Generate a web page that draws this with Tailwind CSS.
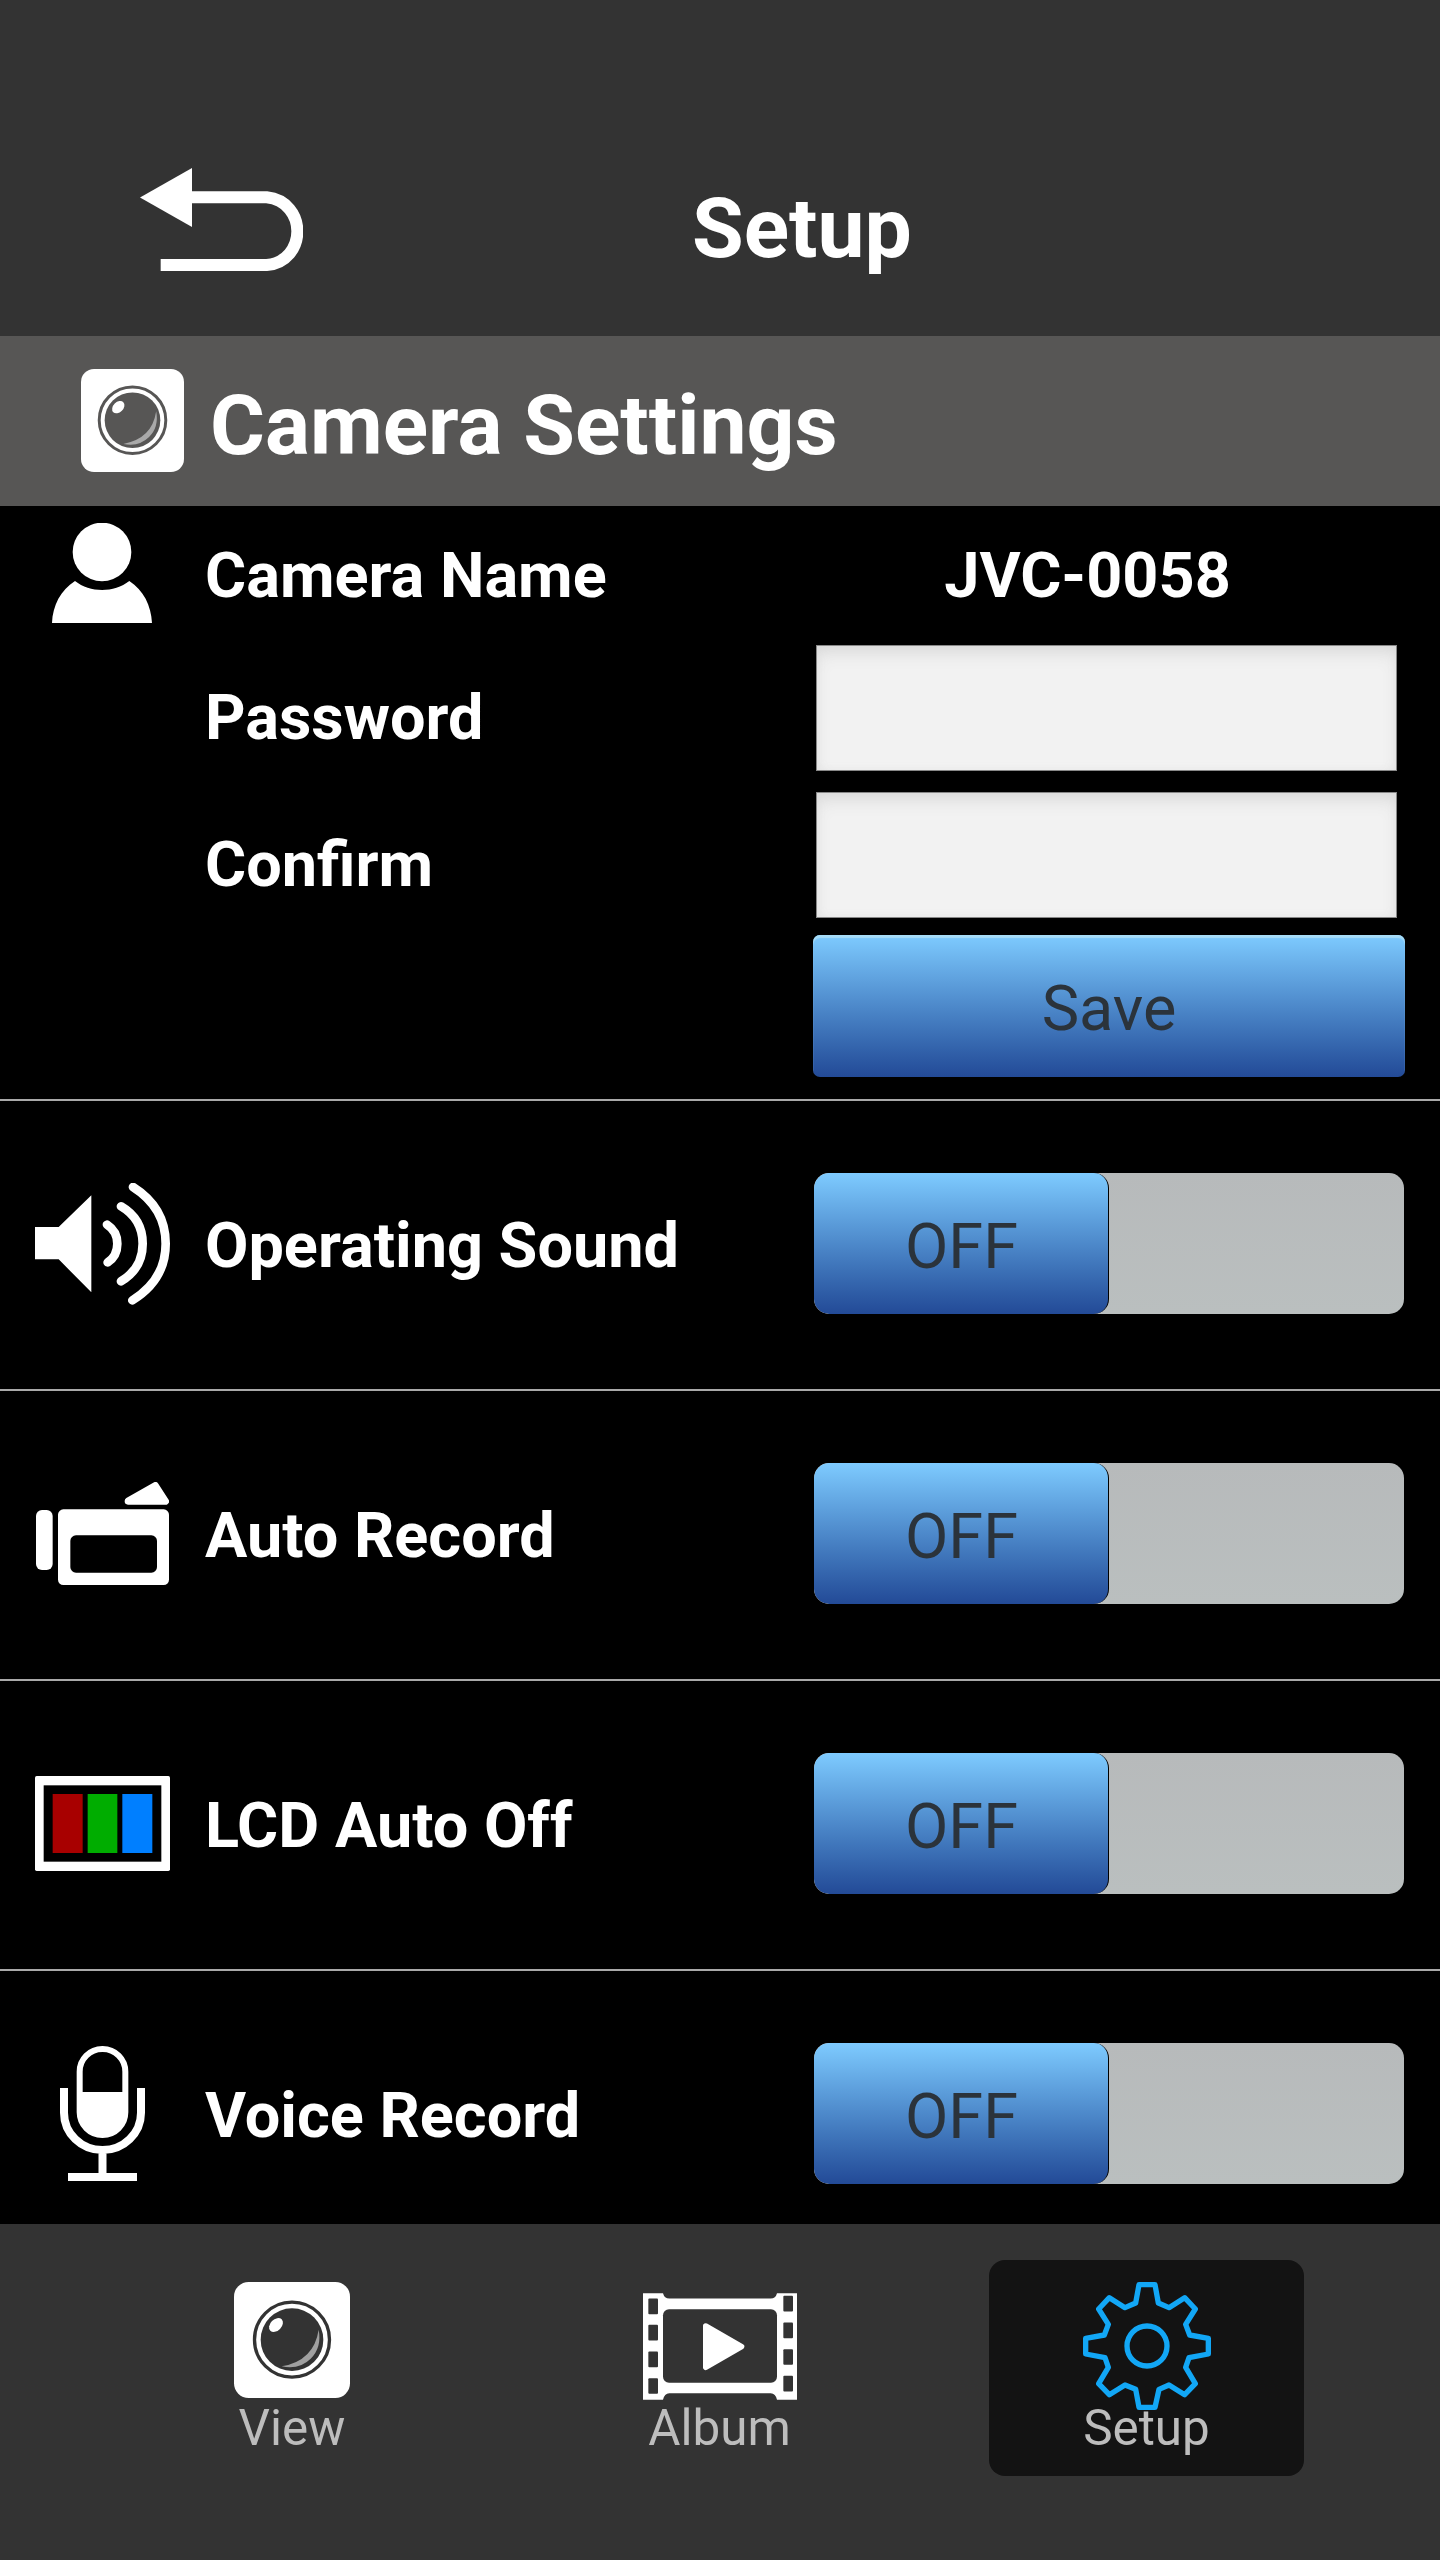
<!DOCTYPE html>
<html lang="en">
<head>
    <meta charset="UTF-8">
    <title>Setup</title>
    <script src="https://cdn.jsdelivr.net/npm/@tailwindcss/browser@4"></script>
</head>
<body class="bg-black font-['Roboto',sans-serif] text-white">
<div class="w-[1440px] h-[2560px] flex flex-col overflow-hidden">

    <!-- Header -->
    <header class="h-[336px] shrink-0 bg-[#333333] flex items-start pl-[140px] pt-[168px]">
        <button class="block" aria-label="Back">
            <svg class="block w-[163px] h-[103px]" viewBox="120 84 489 309">
                <path d="M120 172.500L276 84V261Z" fill="#fff"/>
                <path d="M270 172H500C560 178 592 226 592 274S560 370 500 375H182" fill="none" stroke="#fff" stroke-width="36"/>
            </svg>
        </button>
        <h1 class="ml-[389px] mt-[11px] text-[84px] leading-[100px] font-bold">Setup</h1>
    </header>

    <!-- Section title -->
    <div class="h-[170px] shrink-0 bg-[#575655] flex items-center pl-[81px]">
        <svg class="block w-[103px] h-[103px] -mt-[1px]" viewBox="0 0 348 348">
            <rect width="348" height="348" rx="44" fill="#fff"/>
            <circle cx="174" cy="173" r="112.500" fill="none" stroke="#575655" stroke-width="10"/>
            <circle cx="174" cy="173" r="94" fill="#575655"/>
            <ellipse cx="126" cy="129" rx="24" ry="17" transform="rotate(-45 126 129)" fill="#fff"/>
            <path d="M254 143Q264 196 230 230T143 253Q240 236 254 143Z" fill="#a9a9a9"/>
        </svg>
        <h2 class="ml-[26px] mt-[9px] text-[84px] leading-[100px] font-bold">Camera Settings</h2>
    </div>

    <!-- Settings list -->
    <main class="h-[1718px] shrink-0 overflow-hidden">
        <section class="h-[595px] border-b-2 border-[#a9a9a9] flex">
            <div class="w-[205px] pl-[52px] pt-[17px]">
                <svg class="block w-[100px] h-[100px]" viewBox="36 549 300 300">
                    <circle cx="186" cy="636" r="88" fill="#fff"/>
                    <path d="M36 849C38 797 62 750 105 723C150 759 222 759 268 723C310 750 334 797 336 849Z" fill="#fff"/>
                </svg>
            </div>
            <div class="w-[608px] text-[63px] font-bold">
                <p class="h-[138px] leading-[140px]">Camera Name</p>
                <p class="h-[147px] leading-[147px]">Password</p>
                <p class="h-[147px] leading-[147px]">Confirm</p>
            </div>
            <div class="w-[592px]">
                <p class="h-[139px] pr-[43px] text-[63px] leading-[140px] font-bold text-center">JVC-0058</p>
                <input type="password" class="block ml-[3px] w-[581px] h-[126px] bg-[#f2f2f2] border border-[#888888] shadow-[inset_0_10px_18px_-4px_#d8d8d8,inset_0_0_10px_#e8e8e8]" aria-label="Password">
                <input type="password" class="block ml-[3px] mt-[21px] w-[581px] h-[126px] bg-[#f2f2f2] border border-[#888888] shadow-[inset_0_10px_18px_-4px_#d8d8d8,inset_0_0_10px_#e8e8e8]" aria-label="Confirm">
                <button class="block mt-[17px] w-[592px] h-[142px] rounded-[7px] bg-gradient-to-b from-[#7ecbff] to-[#234a97] shadow-[inset_0_3px_1px_#a6dcf8] text-[63px] leading-[148px] text-[#2b333b]">Save</button>
            </div>
        </section>

        <section class="h-[290px] border-b-2 border-[#a9a9a9] flex items-center">
            <div class="w-[205px] pl-[35px]">
                <svg class="block w-[136px] h-[122px] -mt-[3px]" viewBox="105 98 408 366">
                    <path d="M105 230H176L274 135V426L176 327H105Z" fill="#fff"/>
                    <path d="M321 223Q352 243 352 280T323 336M363 168Q428 206 428 280T363 393M399 110Q497 172 497 280T397 450" fill="none" stroke="#fff" stroke-width="26" stroke-linecap="round"/>
                </svg>
            </div>
            <p class="w-[609px] mt-[1px] text-[63px] leading-[76px] font-bold">Operating Sound</p>
            <div class="-mt-[3px] w-[590px] h-[141px] rounded-[15px] bg-gradient-to-b from-[#b7babb] to-[#babfbf] overflow-hidden">
                <div class="w-[295px] h-[141px] rounded-[15px] bg-gradient-to-b from-[#7ecbff] to-[#234a97] border-r border-black pl-[1px] text-[63px] leading-[148px] text-center text-[#2b333b]">OFF</div>
            </div>
        </section>

        <section class="h-[290px] border-b-2 border-[#a9a9a9] flex items-center">
            <div class="w-[205px] pl-[36px]">
                <svg class="block w-[133px] h-[103px] -mt-[3px]" viewBox="108 126 399 309">
                    <rect x="108" y="210" width="50" height="180" rx="18" fill="#fff"/>
                    <path d="M384 183L466 136L497 184H384Z" fill="#fff" stroke="#fff" stroke-width="20" stroke-linejoin="round"/>
                    <rect x="174" y="208" width="333" height="227" rx="16" fill="#fff"/>
                    <rect x="211" y="286" width="260" height="112" rx="17" fill="#000"/>
                </svg>
            </div>
            <p class="w-[609px] mt-[1px] text-[63px] leading-[76px] font-bold">Auto Record</p>
            <div class="-mt-[3px] w-[590px] h-[141px] rounded-[15px] bg-gradient-to-b from-[#b7babb] to-[#babfbf] overflow-hidden">
                <div class="w-[295px] h-[141px] rounded-[15px] bg-gradient-to-b from-[#7ecbff] to-[#234a97] border-r border-black pl-[1px] text-[63px] leading-[148px] text-center text-[#2b333b]">OFF</div>
            </div>
        </section>

        <section class="h-[290px] border-b-2 border-[#a9a9a9] flex items-center">
            <div class="w-[205px] pl-[35px]">
                <svg class="block w-[135px] h-[95px] -mt-[3px]" viewBox="105 108 405 285">
                    <rect x="105" y="108" width="405" height="285" rx="5" fill="#fff"/>
                    <rect x="131" y="136" width="353" height="229" fill="#000"/>
                    <rect x="158" y="162" width="90" height="177" fill="#a80000"/>
                    <rect x="263" y="162" width="89" height="177" fill="#00ad00"/>
                    <rect x="367" y="162" width="90" height="177" fill="#007fff"/>
                </svg>
            </div>
            <p class="w-[609px] mt-[1px] text-[63px] leading-[76px] font-bold">LCD Auto Off</p>
            <div class="-mt-[3px] w-[590px] h-[141px] rounded-[15px] bg-gradient-to-b from-[#b7babb] to-[#babfbf] overflow-hidden">
                <div class="w-[295px] h-[141px] rounded-[15px] bg-gradient-to-b from-[#7ecbff] to-[#234a97] border-r border-black pl-[1px] text-[63px] leading-[148px] text-center text-[#2b333b]">OFF</div>
            </div>
        </section>

        <section class="h-[290px] flex items-center">
            <div class="w-[205px] pl-[60px]">
                <svg class="block w-[85px] h-[135px] -mt-[6px]" viewBox="180 78 255 405">
                    <rect x="239" y="87" width="137" height="258" rx="68" fill="none" stroke="#fff" stroke-width="18"/>
                    <path d="M234 216H382V276A74 74 0 0 1 234 276Z" fill="#fff"/>
                    <path d="M192 204V278A115.500 112 0 0 0 423 278V204M307.500 390V470M204 471H411" fill="none" stroke="#fff" stroke-width="24"/>
                </svg>
            </div>
            <p class="w-[609px] text-[63px] leading-[76px] font-bold">Voice Record</p>
            <div class="-mt-[5px] w-[590px] h-[141px] rounded-[15px] bg-gradient-to-b from-[#b7babb] to-[#babfbf] overflow-hidden">
                <div class="w-[295px] h-[141px] rounded-[15px] bg-gradient-to-b from-[#7ecbff] to-[#234a97] border-r border-black pl-[1px] text-[63px] leading-[148px] text-center text-[#2b333b]">OFF</div>
            </div>
        </section>
    </main>

    <!-- Bottom navigation -->
    <nav class="h-[336px] shrink-0 bg-[#333333] flex gap-[112px] pl-[135px] pt-9 text-[49.400px] leading-[58px] text-[#bdbdbd]">
        <a class="w-[315px] h-[216px] pt-[22px] pr-[1px] flex flex-col items-center">
            <svg class="block w-[116px] h-[116px]" viewBox="0 0 348 348">
                <rect width="348" height="348" rx="44" fill="#fff"/>
                <circle cx="174" cy="173" r="112.500" fill="none" stroke="#333" stroke-width="10"/>
                <circle cx="174" cy="173" r="94" fill="#333"/>
                <ellipse cx="126" cy="129" rx="24" ry="17" transform="rotate(-45 126 129)" fill="#fff"/>
                <path d="M254 143Q264 196 230 230T143 253Q240 236 254 143Z" fill="#a0a0a0"/>
            </svg>
            <span class="mt-[1px]">View</span>
        </a>
        <a class="w-[315px] h-[216px] pt-[33px] flex flex-col items-center">
            <svg class="block w-[154px] h-[107px]" viewBox="129 159 462 320">
                <path d="M129 159H189Q193 175 208 175H512Q527 175 531 159H591V479H531Q527 459 512 459H208Q193 459 189 479H129Z" fill="#fff"/>
                <rect x="189" y="207" width="342" height="221" rx="18" fill="#333"/>
                <path d="M317 257L425 319.500L317 382Z" fill="#fff" stroke="#fff" stroke-width="16" stroke-linejoin="round"/>
                <g fill="#333">
                    <rect x="145" y="175" width="29" height="47" rx="3"/>
                    <rect x="145" y="254" width="29" height="47" rx="3"/>
                    <rect x="145" y="334" width="29" height="47" rx="3"/>
                    <rect x="145" y="414" width="29" height="47" rx="3"/>
                    <rect x="550" y="167" width="29" height="47" rx="3"/>
                    <rect x="550" y="247" width="29" height="47" rx="3"/>
                    <rect x="550" y="327" width="29" height="47" rx="3"/>
                    <rect x="550" y="407" width="29" height="47" rx="3"/>
                </g>
            </svg>
            <span class="-mt-[1px]">Album</span>
        </a>
        <a class="w-[315px] h-[216px] pt-[22px] flex flex-col items-center rounded-[16px] bg-[#131313]">
            <svg class="block w-[128px] h-[128px]" viewBox="369 156 384 384">
                <g fill="none" stroke="#12a7f6" stroke-width="16" stroke-linejoin="round">
                    <path d="M537 164H585L595 219L627 233L674 203L706 237L677 283L689 315L745 325V372L687 383L677 412L706 461L674 494L627 465L597 478L585 532H537L527 478L495 465L448 494L416 461L445 412L435 383L377 372V325L433 315L445 283L416 237L448 203L495 233L527 219Z"/>
                    <circle cx="561" cy="348" r="60"/>
                </g>
            </svg>
            <span class="-mt-[11px]">Setup</span>
        </a>
    </nav>
</div>
</body>
</html>
